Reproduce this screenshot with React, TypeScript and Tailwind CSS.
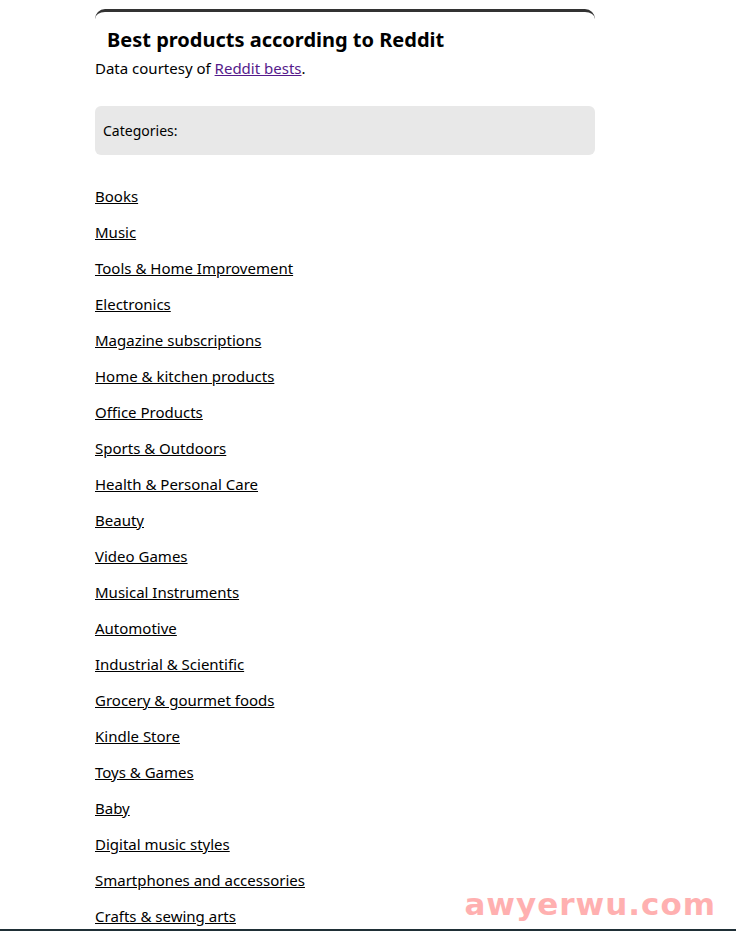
import React from "react";

const cats = [
  "Books",
  "Music",
  "Tools & Home Improvement",
  "Electronics",
  "Magazine subscriptions",
  "Home & kitchen products",
  "Office Products",
  "Sports & Outdoors",
  "Health & Personal Care",
  "Beauty",
  "Video Games",
  "Musical Instruments",
  "Automotive",
  "Industrial & Scientific",
  "Grocery & gourmet foods",
  "Kindle Store",
  "Toys & Games",
  "Baby",
  "Digital music styles",
  "Smartphones and accessories",
  "Crafts & sewing arts",
];

export default function App() {
  return (
    <div
      className="relative h-[931px] w-full overflow-hidden bg-white text-black"
      style={{ fontFamily: '"Noto Sans", "Open Sans", sans-serif' }}
    >
      <div className="ml-[95px] w-[500px] pt-[9px]">
        <div className="h-[22px] rounded-t-[10px] border-t-[3px] border-[#333333]" />
        <h1 className="pl-[12px] text-[20px] font-bold leading-[18px]">
          Best products according to Reddit
        </h1>
        <p className="mt-[9px] text-[15px] leading-[20px]">
          Data courtesy of{" "}
          <a href="#" className="text-[#551a8b] underline">
            Reddit bests
          </a>
          .
        </p>
        <div className="mt-[28px] flex h-[49px] items-center rounded-[6px] bg-[#e8e8e8] px-[8px] text-[14px]">
          Categories:
        </div>
        <ul className="mt-[31px] flex flex-col gap-[16px]">
          {cats.map((c) => (
            <li key={c} className="text-[15px] leading-[20px]">
              <a href="#" className="text-black underline">
                {c}
              </a>
            </li>
          ))}
        </ul>
      </div>
      <div
        className="absolute right-[20px] top-[881px] text-[31px] font-bold tracking-[1px] text-[#ffb0b0]"
        style={{ fontFamily: '"DejaVu Sans", sans-serif' }}
      >
        awyerwu.com
      </div>
      <div className="absolute bottom-0 left-0 h-[2px] w-full bg-[#1f2f36]" />
    </div>
  );
}
